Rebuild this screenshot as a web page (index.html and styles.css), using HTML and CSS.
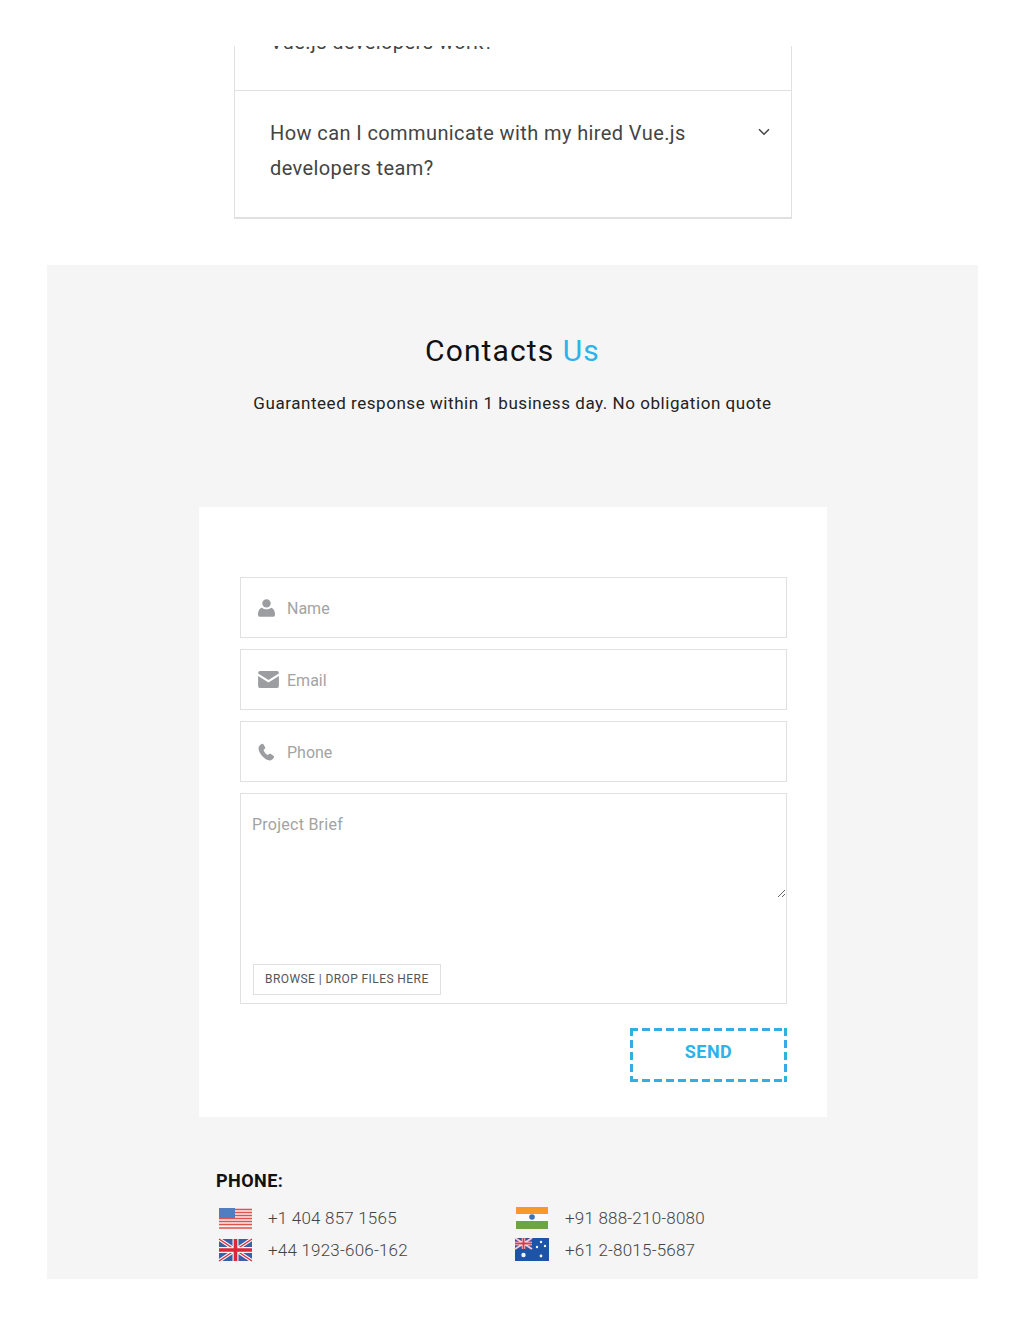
FILE: index.html
```html
<!DOCTYPE html>
<html lang="en">
<head>
    <meta charset="UTF-8">
    <meta name="viewport" content="width=device-width, initial-scale=1.0">
    <title>Contacts Us</title>
    <link rel="stylesheet" href="styles.css">
</head>
<body>
    <!-- FAQ -->
    <div class="faq">
        <div class="faq-item faq-item-cut">
            <p class="faq-question">Vue.js developers work?</p>
        </div>
        <div class="faq-item faq-item-last">
            <p class="faq-question">How can I communicate with my hired Vue.js developers team?</p>
            <svg class="faq-arrow" width="12" height="8" viewBox="0 0 12 8"><path d="M1 1.200l5 5 5-5" fill="none" stroke="#444" stroke-width="1.500"/></svg>
        </div>
    </div>

    <!-- Contacts -->
    <section class="contacts">
        <h2 class="contacts-title">Contacts <span>Us</span></h2>
        <p class="contacts-sub">Guaranteed response within 1 business day. No obligation quote</p>

        <form class="card">
            <div class="field">
                <svg class="field-icon" width="17" height="18" viewBox="0 0 17 18"><circle cx="8.500" cy="4.400" r="4.200" fill="#9b9da1"/><path d="M0 15.500c0-3.800 1.300-6.200 4-6.800 1.200 1 2.700 1.500 4.500 1.500s3.300-.5 4.500-1.500c2.700.6 4 3 4 6.800a2.200 2.200 0 0 1-2.200 2.300H2.200A2.200 2.200 0 0 1 0 15.500z" fill="#9b9da1"/></svg>
                <input type="text" placeholder="Name">
            </div>
            <div class="field">
                <svg class="field-icon" width="21" height="17" viewBox="0 0 22 18"><path d="M0 2a2 2 0 0 1 2-2h18a2 2 0 0 1 2 2v.6l-11 7-11-7z" fill="#9b9da1"/><path d="M0 5.300l11 7 11-7V16a2 2 0 0 1-2 2H2a2 2 0 0 1-2-2z" fill="#9b9da1"/></svg>
                <input type="text" placeholder="Email">
            </div>
            <div class="field">
                <svg class="field-icon" width="17" height="18" viewBox="0 0 16.500 17.500"><path d="M3.500 1c.7-.4 1.500-.3 1.900.4l1.500 2.700c.3.600.2 1.200-.3 1.600l-1.300 1c.7 2.200 2.200 3.900 4.300 5l1.300-1c.5-.4 1.100-.4 1.600-.1l2.500 1.700c.6.400.8 1.200.4 1.800-.9 1.600-2.300 2.800-3.900 2.800C6.800 17 .5 10 .5 5.100.5 3.300 2 1.800 3.500 1z" fill="#9b9da1"/></svg>
                <input type="text" placeholder="Phone">
            </div>
            <div class="brief">
                <textarea placeholder="Project Brief"></textarea>
                <div class="browse">BROWSE | DROP FILES HERE</div>
            </div>
            <div class="send-row">
                <button type="button" class="send">SEND</button>
            </div>
        </form>

        <div class="phones">
            <h3 class="phones-title">PHONE:</h3>
            <div class="phones-grid">
                <div class="phone">
                    <svg width="36" height="24" viewBox="0 0 36 24">
                        <rect x="2" y="2" width="33" height="21" fill="#fbeeee"/>
                        <path d="M2 3.500h33M2 6.500h33M2 9.500h33M2 12.500h33M2 15.500h33M2 18.500h33M2 22h33" stroke="#e0524f" stroke-width="1.600"/>
                        <rect x="2" y="2" width="16" height="10" fill="#4f7fc0"/>
                    </svg>
                    <span>+1 404 857 1565</span>
                </div>
                <div class="phone">
                    <svg width="36" height="24" viewBox="0 0 36 24">
                        <rect x="2" y="1" width="32" height="7" fill="#f8982c"/>
                        <rect x="2" y="8" width="32" height="7" fill="#fafafa"/>
                        <rect x="2" y="15" width="32" height="8" fill="#6ea544"/>
                        <circle cx="18" cy="11" r="2.800" fill="#3b72b0"/>
                    </svg>
                    <span>+91 888-210-8080</span>
                </div>
                <div class="phone">
                    <svg width="36" height="24" viewBox="0 0 36 24">
                        <rect x="2" y="1" width="33" height="22" fill="#3c5fa8"/>
                        <path d="M2 1l33 22M35 1L2 23" stroke="#f6f6f6" stroke-width="3.500"/>
                        <path d="M2 1l33 22M35 1L2 23" stroke="#d8323f" stroke-width="1.400"/>
                        <path d="M18.500 1v22M2 12h33" stroke="#f6f6f6" stroke-width="6"/>
                        <path d="M18.500 1v22M2 12h33" stroke="#d8283a" stroke-width="3.600"/>
                    </svg>
                    <span>+44 1923-606-162</span>
                </div>
                <div class="phone">
                    <svg width="36" height="24" viewBox="0 0 36 24">
                        <rect x="1" y="0" width="34" height="23" fill="#1e54a8"/>
                        <rect x="1" y="0" width="17" height="11" fill="#3a4f96"/>
                        <path d="M1 0l17 11M18 0L1 11" stroke="#f2c9cf" stroke-width="2"/>
                        <path d="M9.500 0v11M1 5.500h17" stroke="#f4f4f4" stroke-width="3.400"/>
                        <path d="M9.500 0v11M1 5.500h17" stroke="#e0364a" stroke-width="2"/>
                        <circle cx="9.500" cy="17" r="2.200" fill="#f4f4f4"/>
                        <circle cx="27" cy="4" r="1.200" fill="#f4f4f4"/>
                        <circle cx="23" cy="9" r="1.200" fill="#f4f4f4"/>
                        <circle cx="31" cy="8" r="1.200" fill="#f4f4f4"/>
                        <circle cx="27" cy="18" r="1.400" fill="#f4f4f4"/>
                    </svg>
                    <span>+61 2-8015-5687</span>
                </div>
            </div>
        </div>
    </section>
</body>
</html>
```

FILE: styles.css
```css
* {
    box-sizing: border-box;
}
body {
    margin: 0;
    height: 1325px;
    background-color: #fff;
    font-family: Roboto, "Liberation Sans", sans-serif;
    overflow: hidden;
}

/* FAQ */
.faq {
    width: 558px;
    margin: 46px 0 46px 234px;
    border: 1px solid #e0e0e0;
    border-top: none;
    border-bottom: 2px solid #e0e0e0;
}
.faq-item {
    display: flex;
    justify-content: space-between;
    align-items: flex-start;
    padding: 25px 20px 31px 35px;
}
.faq-item-cut {
    height: 45px;
    padding-top: 0;
    padding-bottom: 30px;
    align-items: flex-end;
    overflow: hidden;
    border-bottom: 1px solid #e0e0e0;
}
.faq-question {
    width: 440px;
    flex-shrink: 0;
    margin: 0;
    font-size: 20px;
    line-height: 35px;
    letter-spacing: 0.4px;
    color: #444;
}
.faq-arrow {
    margin: 12px 1px 0 0;
}

/* Contacts */
.contacts {
    width: 931px;
    height: 1014px;
    margin-left: 47px;
    padding-top: 66px;
    background-color: #f5f5f5;
}
.contacts-title {
    margin: 0;
    font-size: 30px;
    font-weight: 400;
    line-height: 40px;
    letter-spacing: 1.1px;
    text-align: center;
    color: #111;
}
.contacts-title span {
    color: #2fb2ea;
}
.contacts-sub {
    margin: 20px 0 0;
    font-size: 17px;
    line-height: 24px;
    letter-spacing: 0.55px;
    text-align: center;
    color: #222;
}
.card {
    width: 628px;
    height: 610px;
    margin: 92px 0 0 152px;
    padding: 70px 40px 0 41px;
    background-color: #fff;
}
.field {
    display: grid;
    grid-template-columns: 29px 1fr;
    align-items: center;
    height: 61px;
    margin-bottom: 11px;
    padding-left: 17px;
    border: 1px solid #e0e0e0;
}
.field input {
    width: 100%;
    border: none;
    outline: none;
    padding: 2px 0 0;
    font-family: inherit;
    font-size: 16px;
    background: transparent;
}
input::placeholder,
textarea::placeholder {
    color: #a3a3a3;
    opacity: 1;
}
.brief {
    display: flex;
    flex-direction: column;
    height: 211px;
    padding: 1px 0 0;
    border: 1px solid #e0e0e0;
}
.brief textarea {
    display: block;
    width: 100%;
    height: 103px;
    padding: 20px 11px 0;
    border: none;
    outline: none;
    font-family: inherit;
    font-size: 16px;
    line-height: 20px;
    letter-spacing: 0.25px;
    resize: vertical;
}
.browse {
    align-self: flex-start;
    margin: 66px 0 0 12px;
    padding: 0 11px;
    height: 31px;
    border: 1px solid #e0e0e0;
    font-size: 12px;
    line-height: 28px;
    letter-spacing: 0.42px;
    color: #555;
    white-space: nowrap;
}
.send-row {
    display: flex;
    justify-content: flex-end;
    margin-top: 24px;
}
/* borda tracejada desenhada com gradientes, o dashed do browser fica curto */
.send {
    width: 157px;
    height: 54px;
    padding: 0 0 7px;
    border: none;
    background-color: #fff;
    background-image:
        linear-gradient(to right, #35ade3 8px, transparent 8px),
        linear-gradient(to right, #35ade3 8px, transparent 8px),
        linear-gradient(to bottom, #35ade3 8px, transparent 8px),
        linear-gradient(to bottom, #35ade3 8px, transparent 8px);
    background-size: 12px 3px, 12px 3px, 3px 12px, 3px 12px;
    background-position: top left, bottom left, top left, top right;
    background-repeat: repeat-x, repeat-x, repeat-y, repeat-y;
    color: #2fb2ea;
    font-family: inherit;
    font-size: 18px;
    font-weight: 700;
    letter-spacing: 0.5px;
}

/* Phones */
.phones {
    margin: 51px 0 0 169px;
}
.phones-title {
    margin: 0;
    font-size: 18px;
    font-weight: 700;
    line-height: 26px;
    letter-spacing: 0.45px;
    color: #111;
}
.phones-grid {
    display: grid;
    grid-template-columns: 297px 260px;
    grid-auto-rows: 32px;
    margin: 8px 0 0 1px;
}
.phone {
    display: grid;
    grid-template-columns: 51px 1fr;
    align-items: center;
    font-size: 17px;
    font-weight: 300;
    letter-spacing: 0.2px;
    color: #444;
}
```
